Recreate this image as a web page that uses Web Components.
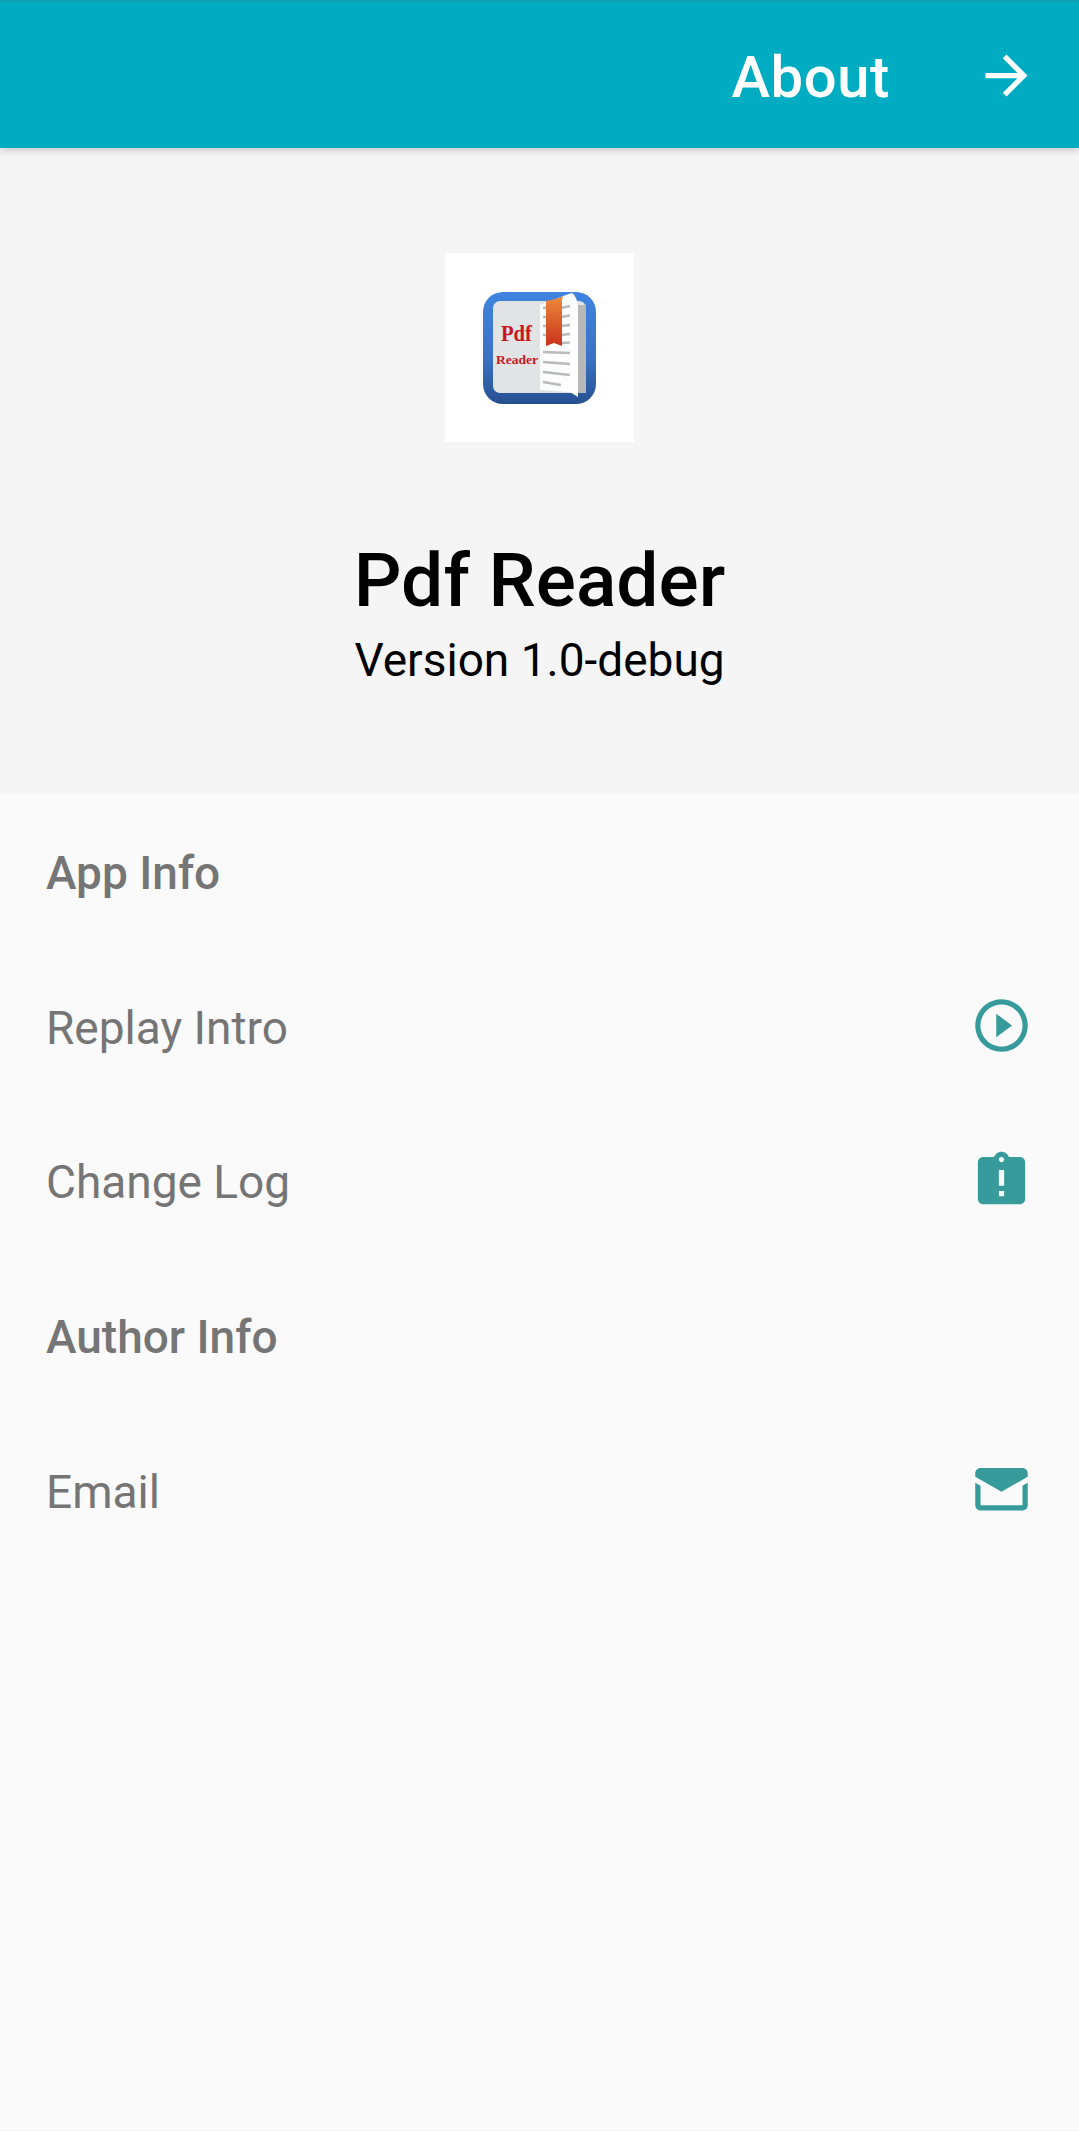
<!DOCTYPE html>
<html lang="en">
<head>
<meta charset="utf-8">
<title>About</title>
<style>
  html, body { margin: 0; height: 100%; }
  body { background: #fafafa; font-family: Roboto, "Liberation Sans", sans-serif; }
  about-screen { height: 2131px; }
</style>
</head>
<body>
<about-screen>
  <app-bar title="About"></app-bar>
  <app-hero name="Pdf Reader" version="Version 1.0-debug"></app-hero>
  <info-list>
    <section-title>App Info</section-title>
    <info-row icon="play">Replay Intro</info-row>
    <info-row icon="clipboard">Change Log</info-row>
    <section-title>Author Info</section-title>
    <info-row icon="mail">Email</info-row>
  </info-list>
</about-screen>

<script>
// material icons, 24 unit viewbox
const ICONS = {
  play: '<path d="M10 16.5l6-4.5-6-4.5v9zM12 2C6.48 2 2 6.48 2 12s4.48 10 10 10 10-4.48 10-10S17.52 2 12 2zm0 18c-4.41 0-8-3.59-8-8s3.59-8 8-8 8 3.59 8 8-3.59 8-8 8z"/>',
  clipboard: '<path d="M19 3h-4.18C14.4 1.84 13.3 1 12 1s-2.4.84-2.82 2H5c-1.1 0-2 .9-2 2v14c0 1.1.9 2 2 2h14c1.1 0 2-.9 2-2V5c0-1.1-.9-2-2-2zm-6 15h-2v-2h2v2zm0-4h-2V8h2v6zm-1-9c-.55 0-1-.45-1-1s.45-1 1-1 1 .45 1 1-.45 1-1 1z"/>',
  mail: '<path d="M22 5.8c0-1.1-.9-2-2-2H4c-1.1 0-2 .9-2 2v1.3l10 5.8 10-5.8V5.8zM2 9.4V18c0 1.1.9 2 2 2h16c1.1 0 2-.9 2-2V9.4l-2 1.2V18H4v-7.4L2 9.4z"/>',
  arrow: '<path d="M12 4l-1.41 1.41L16.17 11H4v2h12.17l-5.58 5.59L12 20l8-8z"/>'
};

class AboutScreen extends HTMLElement {
  constructor() {
    super();
    this.attachShadow({ mode: 'open' }).innerHTML = `
      <style>
        :host {
          display: flex;
          flex-direction: column;
          box-sizing: border-box;
          background: #fafafa;
          border-bottom: 1px solid #f3f3f3;
        }
      </style>
      <slot></slot>`;
  }
}

class AppBar extends HTMLElement {
  constructor() {
    super();
    this.attachShadow({ mode: 'open' }).innerHTML = `
      <style>
        :host {
          display: flex;
          align-items: center;
          justify-content: flex-end;
          box-sizing: border-box;
          height: 148px;
          padding-right: 41px;
          background: #00acc1;
          border-top: 2px solid #0a9fb3;
          color: #fff;
          box-shadow: 0 2px 8px rgba(0, 0, 0, .2);
          position: relative;
          z-index: 1;
        }
        span { font-size: 58px; font-weight: 500; letter-spacing: .6px; margin: 4px 85px 0 0; }
        svg { width: 63px; height: 63px; display: block; fill: #fff; }
      </style>
      <span></span>
      <svg viewBox="0 0 24 24">${ICONS.arrow}</svg>`;
    this.shadowRoot.querySelector('span').textContent = this.getAttribute('title');
  }
}

class AppHero extends HTMLElement {
  constructor() {
    super();
    this.attachShadow({ mode: 'open' }).innerHTML = `
      <style>
        :host {
          display: flex;
          flex-direction: column;
          align-items: center;
          box-sizing: border-box;
          height: 645px;
          padding-top: 105px;
          background: #f5f5f5;
          color: #000;
        }
        .logo { display: block; width: 189px; height: 189px; background: #fff; }
        h1 { margin: 96px 0 0; font-size: 75px; line-height: 84px; font-weight: 500; }
        p { margin: 10px 0 0; font-size: 46px; line-height: 56px; font-weight: 400; }
      </style>
      <svg class="logo" viewBox="0 0 189 189">
        <defs>
          <linearGradient id="frame" x1="0" y1="0" x2="0" y2="1">
            <stop offset="0" stop-color="#3f84e0"/>
            <stop offset=".6" stop-color="#3a72c4"/>
            <stop offset="1" stop-color="#26508f"/>
          </linearGradient>
          <linearGradient id="ribbon" x1="0" y1="0" x2="0" y2="1">
            <stop offset="0" stop-color="#ee8a3c"/>
            <stop offset="1" stop-color="#c8321c"/>
          </linearGradient>
        </defs>
        <rect x="38" y="39" width="113" height="112" rx="20" fill="url(#frame)"/>
        <rect x="48" y="48" width="93" height="92" rx="7" fill="#e2e3e5"/>
        <rect x="130" y="52" width="11" height="88" fill="#b7b8ba"/>
        <path d="M95 52c8-2 22-9 32-12 4 3 6 9 6 16v88l-8-5-30-2z" fill="#fdfdfd"/>
        <g stroke="#b9babd" stroke-width="2.6" fill="none">
          <path d="M98 55l3-.4M98 64h3M98 73h3M98 82h3"/>
          <path d="M116 55l9-2M116 64l9-1.5M116 73l9-1M116 82l9-1M116 90l9-.5"/>
          <path d="M98 99l27 1M98 109l27 2M98 119l27 3M98 129l18 3"/>
        </g>
        <path d="M101 48c6-1 10-2 17-5l-1 3v47l-8-3-8 3z" fill="url(#ribbon)"/>
        <text x="71.5" y="88" text-anchor="middle" textLength="31" lengthAdjust="spacingAndGlyphs" font-family="Liberation Serif, serif" font-weight="700" font-size="24" fill="#c9161d">Pdf</text>
        <text x="72" y="111" text-anchor="middle" textLength="42" lengthAdjust="spacingAndGlyphs" font-family="Liberation Serif, serif" font-weight="700" font-size="13.5" fill="#c9161d">Reader</text>
      </svg>
      <h1></h1>
      <p></p>`;
    this.shadowRoot.querySelector('h1').textContent = this.getAttribute('name');
    this.shadowRoot.querySelector('p').textContent = this.getAttribute('version');
  }
}

class InfoList extends HTMLElement {
  constructor() {
    super();
    this.attachShadow({ mode: 'open' }).innerHTML = `
      <style>
        :host { display: flex; flex-direction: column; padding-top: 3px; }
      </style>
      <slot></slot>`;
  }
}

class SectionTitle extends HTMLElement {
  constructor() {
    super();
    this.attachShadow({ mode: 'open' }).innerHTML = `
      <style>
        :host {
          display: flex;
          align-items: center;
          height: 154.6px;
          padding-left: 46px;
          font-size: 46px;
          font-weight: 500;
          color: #757575;
        }
      </style>
      <slot></slot>`;
  }
}

class InfoRow extends HTMLElement {
  constructor() {
    super();
    this.attachShadow({ mode: 'open' }).innerHTML = `
      <style>
        :host {
          display: flex;
          align-items: center;
          justify-content: space-between;
          height: 154.6px;
          padding: 0 46px;
          font-size: 46px;
          color: #757575;
        }
        svg { width: 63px; height: 63px; fill: #379b9c; display: block; margin-top: -4px; }
      </style>
      <slot></slot>
      <svg viewBox="0 0 24 24">${ICONS[this.getAttribute('icon')]}</svg>`;
  }
}

customElements.define('about-screen', AboutScreen);
customElements.define('app-bar', AppBar);
customElements.define('app-hero', AppHero);
customElements.define('info-list', InfoList);
customElements.define('section-title', SectionTitle);
customElements.define('info-row', InfoRow);
</script>
</body>
</html>
